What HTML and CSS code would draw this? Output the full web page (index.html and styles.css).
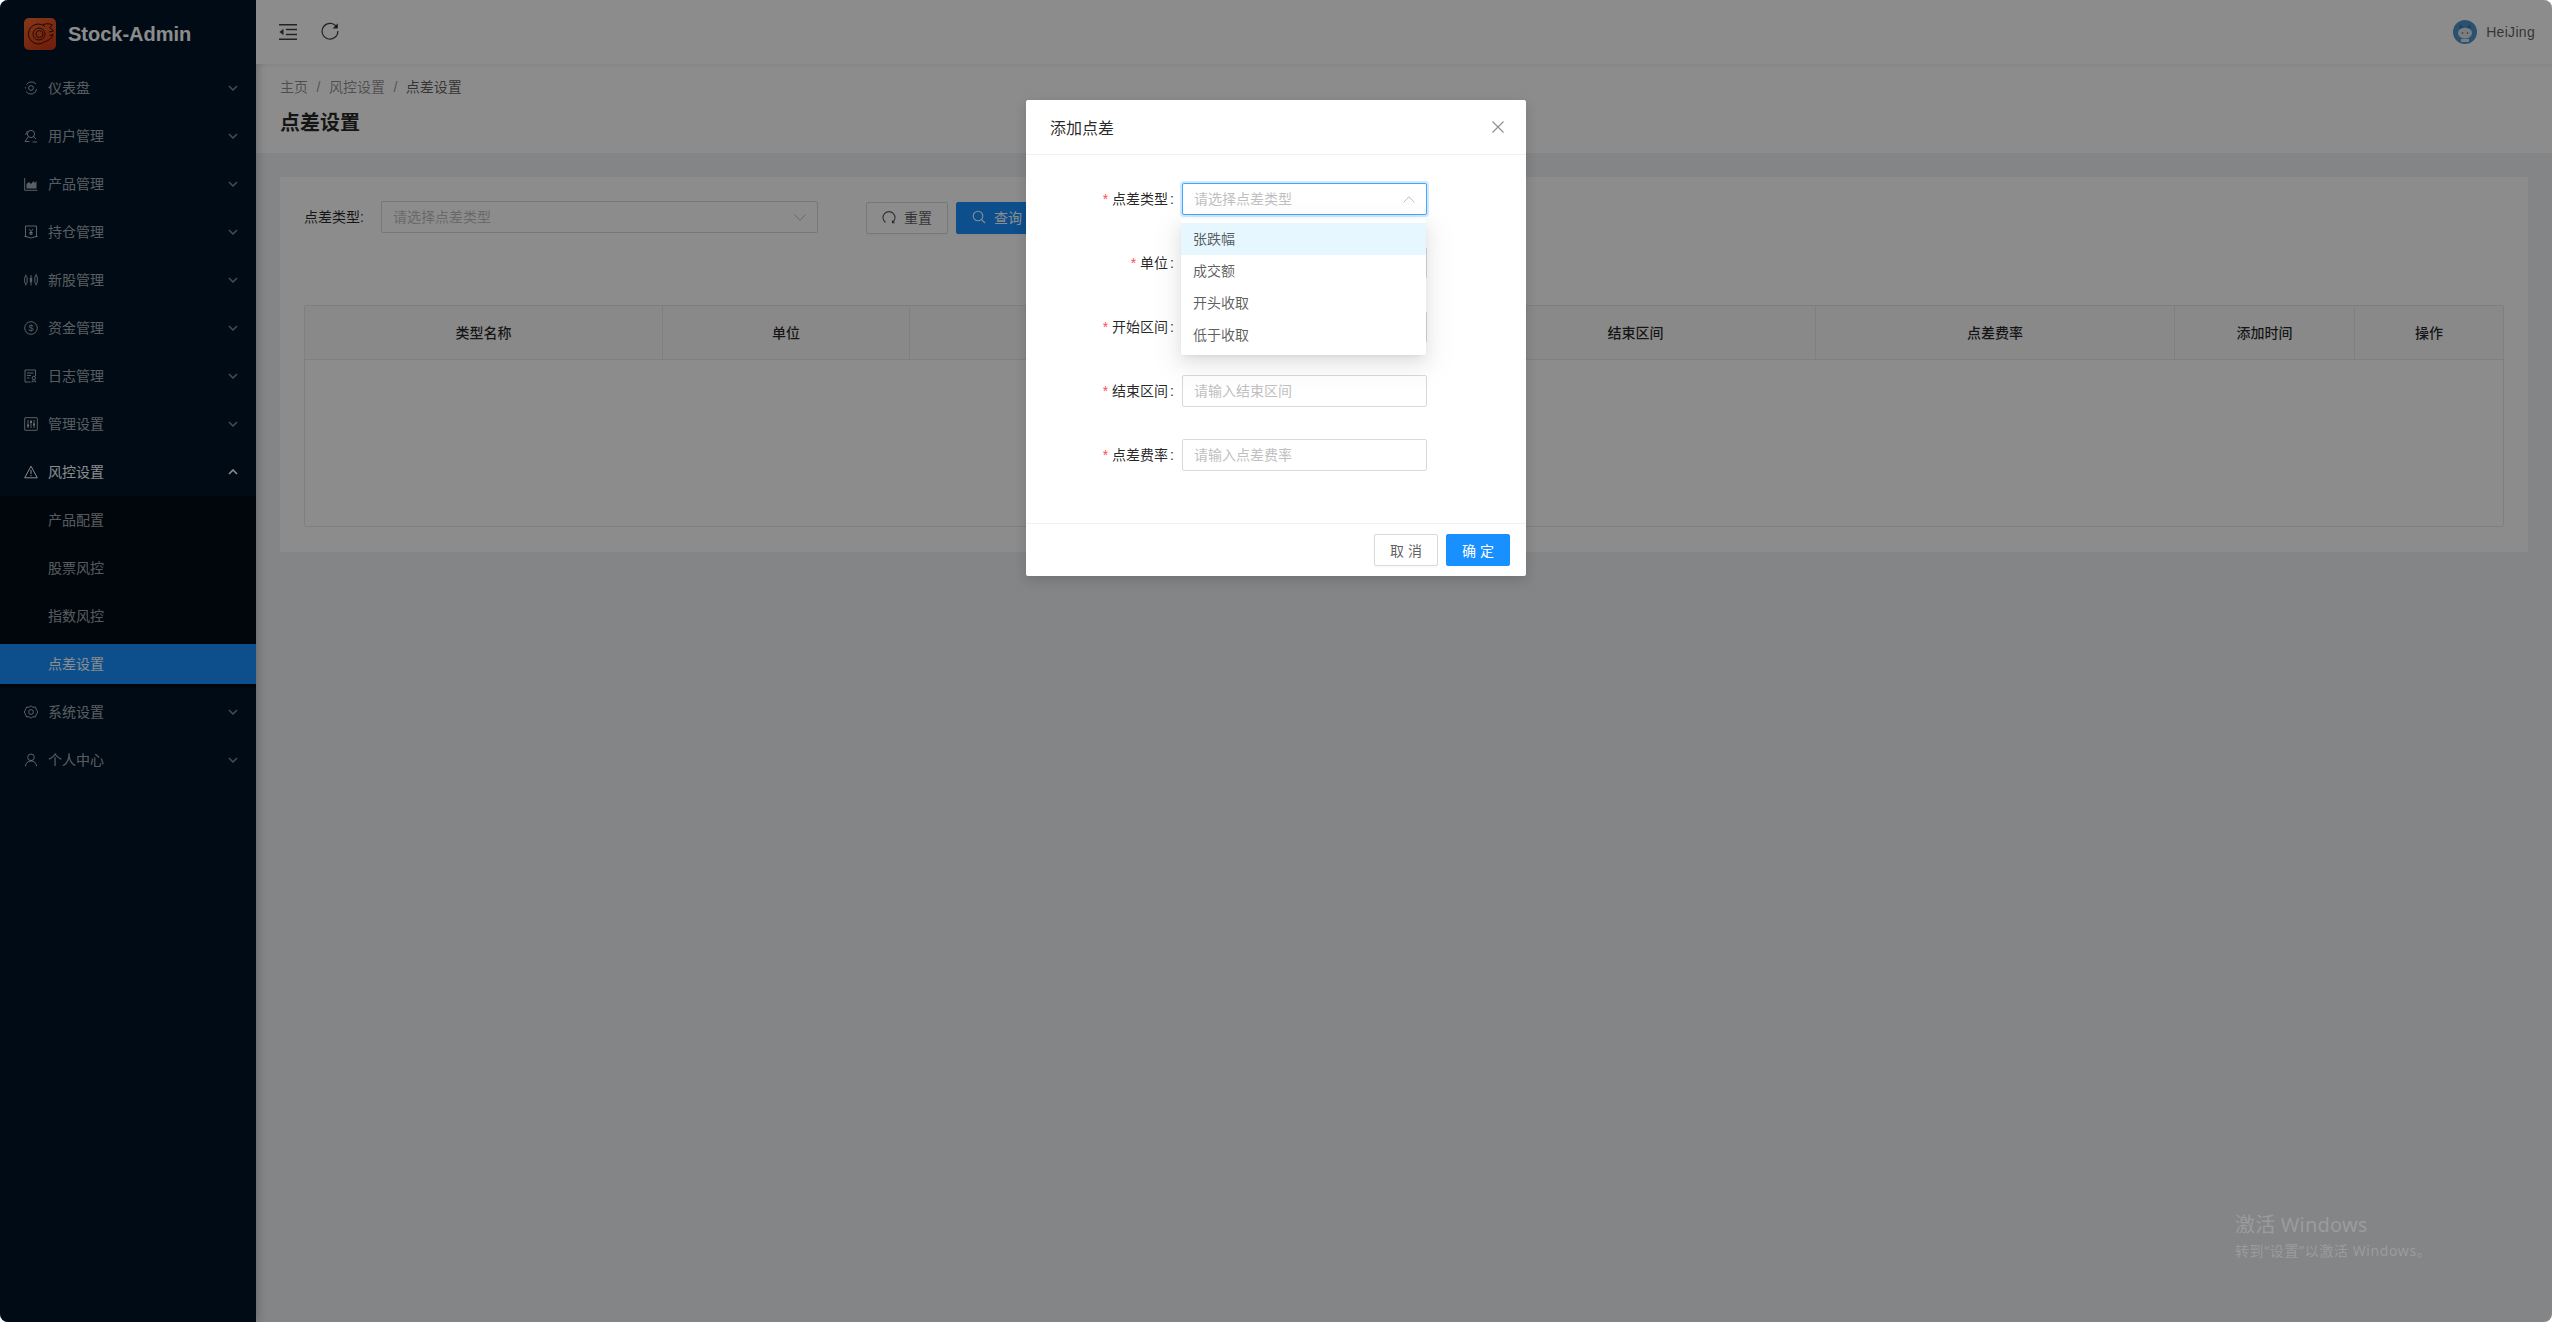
FILE: index.html
```html
<!DOCTYPE html>
<html lang="zh-CN">
<head>
  <meta charset="UTF-8" />
  <title>点差设置 - Stock-Admin</title>
  <link rel="stylesheet" href="styles.css">
</head>
<body>
<div class="app">

  <!-- Sidebar -->
  <aside class="sidebar">
    <div class="logo">
      <svg class="logo-mark" viewBox="0 0 32 32">
        <rect width="32" height="32" rx="5" fill="url(#logoFill)"/>
        <defs>
          <linearGradient id="logoFill" x1="0" y1="0" x2="0.6" y2="1">
            <stop offset="0" stop-color="#f4692c"/>
            <stop offset="1" stop-color="#cf3a18"/>
          </linearGradient>
        </defs>
        <g fill="none" stroke="#3b1206" stroke-width="1">
          <path d="M21 8.500A10 10 0 1 0 21 23.500C25 23 28 20 29 16.500L25.500 17.500"/>
          <path d="M19 6.500C22.500 5.500 26 5.500 28.500 7L25.500 9.500C27 10.200 28.500 11.500 29.500 13L25 14"/>
          <circle cx="15" cy="16" r="6"/>
          <circle cx="15.500" cy="16" r="3.500"/>
        </g>
      </svg>
      <span class="logo-text">Stock-Admin</span>
    </div>

    <ul class="menu">
      <li class="menu-item">
        <svg class="menu-icon" viewBox="0 0 14 14"><path d="M2.500 3.500A6 6 0 0 1 12 3M12.600 8A5.800 5.800 0 0 1 2 10.500M1.500 7.500A5.500 5.500 0 0 1 1.500 6"/><circle cx="7" cy="7" r="2.400"/></svg>
        <span class="menu-label">仪表盘</span>
        <svg class="chevron" viewBox="0 0 10 6"><path d="M1 1l4 4 4-4"/></svg>
      </li>
      <li class="menu-item">
        <svg class="menu-icon" viewBox="0 0 14 14"><circle cx="7" cy="5" r="3.600"/><path d="M9.600 7.600L12 10M4 8L1 12.500H5.500M8.500 13H13M3.500 2L1.500 6"/></svg>
        <span class="menu-label">用户管理</span>
        <svg class="chevron" viewBox="0 0 10 6"><path d="M1 1l4 4 4-4"/></svg>
      </li>
      <li class="menu-item">
        <svg class="menu-icon" viewBox="0 0 14 14"><path d="M.7 1v12.300H13.500"/><path class="solid" d="M2.500 11.500V7l2.500-2 2 2 2.500-3 1 2 2-2v7.500z"/></svg>
        <span class="menu-label">产品管理</span>
        <svg class="chevron" viewBox="0 0 10 6"><path d="M1 1l4 4 4-4"/></svg>
      </li>
      <li class="menu-item">
        <svg class="menu-icon" viewBox="0 0 14 14"><path d="M1.500 1H12.500V11.500L7 13 1.500 11.500z"/><path d="M0.500 11.500h2M11.500 11.500h2M5 4l2 2.500L9 4M7 6.500V10M5.300 7.500h3.400M5.300 9h3.400"/></svg>
        <span class="menu-label">持仓管理</span>
        <svg class="chevron" viewBox="0 0 10 6"><path d="M1 1l4 4 4-4"/></svg>
      </li>
      <li class="menu-item">
        <svg class="menu-icon" viewBox="0 0 14 14"><rect x="0.700" y="3.500" width="2.400" height="7" rx="1"/><rect x="5.800" y="4.500" width="2.400" height="5" rx="1" class="solid"/><rect x="10.900" y="3" width="2.400" height="7.500" rx="1"/><path d="M1.900 1.500v2M1.900 10.500v2M7 2v2.500M7 9.500V12.500M12.100 1v2M12.100 10.500v2"/></svg>
        <span class="menu-label">新股管理</span>
        <svg class="chevron" viewBox="0 0 10 6"><path d="M1 1l4 4 4-4"/></svg>
      </li>
      <li class="menu-item">
        <svg class="menu-icon" viewBox="0 0 14 14"><circle cx="7" cy="7" r="6.300"/><text class="icon-glyph" x="7" y="10">$</text></svg>
        <span class="menu-label">资金管理</span>
        <svg class="chevron" viewBox="0 0 10 6"><path d="M1 1l4 4 4-4"/></svg>
      </li>
      <li class="menu-item">
        <svg class="menu-icon" viewBox="0 0 14 14"><path d="M6.500 13H1V1H11.500V7"/><path d="M3 4h6.500M3 6.500h4M3 9h2.500"/><circle cx="9.800" cy="9" r="1.700"/><path d="M8 13.300v-1.200h3.600v1.200"/></svg>
        <span class="menu-label">日志管理</span>
        <svg class="chevron" viewBox="0 0 10 6"><path d="M1 1l4 4 4-4"/></svg>
      </li>
      <li class="menu-item">
        <svg class="menu-icon" viewBox="0 0 14 14"><rect x="0.700" y="0.700" width="12.600" height="12.600" rx="0.500"/><path d="M4 3v8M7 3v8M10 3v8"/><path class="thick" d="M3 8.500h2M6 5h2M9 7.500h2"/></svg>
        <span class="menu-label">管理设置</span>
        <svg class="chevron" viewBox="0 0 10 6"><path d="M1 1l4 4 4-4"/></svg>
      </li>
      <li class="menu-item is-open">
        <svg class="menu-icon" viewBox="0 0 14 14"><path d="M7 1.200L13.300 12.800H.7z"/><path d="M7 5v4M7 10v1.200"/></svg>
        <span class="menu-label">风控设置</span>
        <svg class="chevron" viewBox="0 0 10 6"><path d="M1 5l4-4 4 4"/></svg>
      </li>
      <li>
        <ul class="sub-menu">
          <li class="menu-item">产品配置</li>
          <li class="menu-item">股票风控</li>
          <li class="menu-item">指数风控</li>
          <li class="menu-item is-selected">点差设置</li>
        </ul>
      </li>
      <li class="menu-item">
        <svg class="menu-icon" viewBox="0 0 14 14"><path d="M7 .8L9 2.300 11.400 2 12.300 4.300 13.800 7 12.300 9.700 11.400 12 9 11.700 7 13.200 5 11.700 2.600 12 1.700 9.700 .2 7 1.700 4.300 2.600 2 5 2.300z"/><circle cx="7" cy="7" r="2.400"/></svg>
        <span class="menu-label">系统设置</span>
        <svg class="chevron" viewBox="0 0 10 6"><path d="M1 1l4 4 4-4"/></svg>
      </li>
      <li class="menu-item">
        <svg class="menu-icon" viewBox="0 0 14 14"><circle cx="7" cy="4.300" r="3.300"/><path d="M1.500 13.300C1.500 10 4 8 7 8s5.500 2 5.500 5.300"/></svg>
        <span class="menu-label">个人中心</span>
        <svg class="chevron" viewBox="0 0 10 6"><path d="M1 1l4 4 4-4"/></svg>
      </li>
    </ul>
  </aside>

  <!-- Main column -->
  <div class="main">
    <header class="topbar">
      <svg class="topbar-icon" viewBox="0 0 18 16"><path d="M0 .8h18M0 15.200h18M7 5.500h11M7 10.500h11"/><path class="solid" d="M4.500 4.800v6.400L.4 8z"/></svg>
      <svg class="topbar-icon reload" viewBox="0 0 18 18"><path d="M15.800 5.200A7.900 7.900 0 1 0 16.900 9"/><path class="solid" d="M16.800 1.200v5.300h-5.300z"/></svg>
      <div class="user">
        <svg class="avatar" viewBox="0 0 24 24">
          <circle cx="12" cy="12" r="12" fill="#4e95cb"/>
          <path d="M6 9L7 4l3 3h4l3-3 1 5z" fill="#2f78b5"/>
          <ellipse cx="12" cy="13" rx="7" ry="5.500" fill="#dfe6ea"/>
          <circle cx="9.500" cy="13" r="0.800" fill="#555"/>
          <circle cx="14.500" cy="13" r="0.800" fill="#555"/>
          <rect x="8" y="19" width="8" height="3" fill="#dfe6ea"/>
        </svg>
        <span class="user-name">HeiJing</span>
      </div>
    </header>

    <section class="page-head">
      <div class="breadcrumb">
        <span>主页</span><i>/</i><span>风控设置</span><i>/</i><span class="current">点差设置</span>
      </div>
      <h1>点差设置</h1>
    </section>

    <section class="card">
      <div class="search">
        <span class="search-label">点差类型:</span>
        <div class="select search-select">
          <span class="placeholder">请选择点差类型</span>
          <svg class="select-arrow" viewBox="0 0 12 7"><path d="M.7.7L6 6.300 11.300.7"/></svg>
        </div>
        <button class="btn">
          <svg class="btn-icon" viewBox="0 0 14 14"><path d="M3.500 12.500A6 6 0 1 1 10.500 12.500"/><path d="M10.500 10.500v2.200h2.200"/></svg>重置
        </button>
        <button class="btn btn-primary">
          <svg class="btn-icon" viewBox="0 0 14 14"><circle cx="6" cy="6" r="4.800"/><path d="M9.500 9.500L13 13"/></svg>查询
        </button>
      </div>

      <table class="data-table">
        <thead>
          <tr>
            <th class="col-name">类型名称</th>
            <th class="col-unit">单位</th>
            <th class="col-start"></th>
            <th class="col-end">结束区间</th>
            <th class="col-rate">点差费率</th>
            <th class="col-time">添加时间</th>
            <th class="col-action">操作</th>
          </tr>
        </thead>
        <tbody>
          <tr><td colspan="7"></td></tr>
        </tbody>
      </table>
    </section>
  </div>

  <!-- Dialog -->
  <div class="mask">
    <div class="modal">
      <div class="modal-head">
        <span>添加点差</span>
        <svg class="modal-close" viewBox="0 0 12 12"><path d="M.5.5l11 11M11.500.5l-11 11"/></svg>
      </div>
      <div class="modal-body">
        <div class="form-row">
          <label><b>*</b>点差类型<em>:</em></label>
          <div class="select is-focused">
            <span class="placeholder">请选择点差类型</span>
            <svg class="select-arrow" viewBox="0 0 12 7"><path d="M.7 6.300L6 .7l5.300 5.600"/></svg>
            <ul class="dropdown">
              <li class="is-active">张跌幅</li>
              <li>成交额</li>
              <li>开头收取</li>
              <li>低于收取</li>
            </ul>
          </div>
        </div>
        <div class="form-row">
          <label><b>*</b>单位<em>:</em></label>
          <div class="select"></div>
        </div>
        <div class="form-row">
          <label><b>*</b>开始区间<em>:</em></label>
          <div class="select"></div>
        </div>
        <div class="form-row">
          <label><b>*</b>结束区间<em>:</em></label>
          <div class="select"><span class="placeholder">请输入结束区间</span></div>
        </div>
        <div class="form-row">
          <label><b>*</b>点差费率<em>:</em></label>
          <div class="select"><span class="placeholder">请输入点差费率</span></div>
        </div>
      </div>
      <div class="modal-foot">
        <button class="btn">取 消</button>
        <button class="btn btn-primary">确 定</button>
      </div>
    </div>

    <div class="watermark">
      <p class="watermark-title">激活 Windows</p>
      <p class="watermark-text">转到“设置”以激活 Windows。</p>
    </div>
  </div>

</div>
</body>
</html>
```

FILE: styles.css
```css
* {
  box-sizing: border-box;
}
html, body {
  margin: 0; padding: 0; height: 100%;
  background: #fff;
  overflow: hidden;
  font-family: "Liberation Sans", "Noto Sans CJK SC", sans-serif;
  font-size: 14px;
  color: rgba(0,0,0,.85);
}
ul {
  margin: 0; padding: 0;
  list-style: none;
}
svg {
  flex: none;
  fill: none;
  stroke: currentColor;
}
svg .solid {
  fill: currentColor;
  stroke: none;
}
.app {
  position: relative;
  display: flex;
  height: 100vh;
  border-radius: 8px;
  overflow: hidden;
  background: #f0f2f5;
}

/* Sidebar */
.sidebar {
  flex: none;
  width: 256px;
  background: #001529;
  color: rgba(255,255,255,.65);
  box-shadow: 2px 0 8px rgba(29,35,41,.25);
  position: relative;
}
.logo {
  display: flex;
  align-items: center;
  height: 64px;
  padding: 4px 0 0 24px;
}
.logo-mark {
  width: 32px; height: 32px;
  stroke: none;
}
.logo-text {
  margin-left: 12px;
  font-size: 20px;
  font-weight: 700;
  color: #fff;
}
.menu, .sub-menu {
  display: flex;
  flex-direction: column;
}
.menu-item {
  display: flex;
  align-items: center;
  height: 40px;
  margin: 4px 0;
  padding: 0 0 2px 48px;
  position: relative;
}
.menu-icon {
  position: absolute;
  left: 24px; top: 13px;
  width: 14px; height: 14px;
  stroke-width: 1;
}
.menu-icon .thick {
  stroke-width: 1.8;
}
.icon-glyph {
  font-size: 9px;
  text-anchor: middle;
  fill: currentColor;
  stroke: none;
}
.menu-label {
  flex: 1;
}
.chevron {
  width: 10px; height: 6px;
  margin: 2px 18px 0 0;
  stroke-width: 1.6;
  opacity: .75;
}
.is-open {
  color: #fff;
}
.is-open .chevron {
  opacity: 1;
}
.sub-menu {
  background: #000c17;
}
.is-selected {
  background: #1890ff;
  color: #fff;
}

/* Main column */
.main {
  flex: 1;
  min-width: 0;
}
.topbar {
  display: flex;
  align-items: center;
  height: 64px;
  padding: 0 17px 0 23px;
  background: #fff;
  box-shadow: 0 1px 4px rgba(0,21,41,.08);
  position: relative;
  color: rgba(0,0,0,.75);
}
.topbar-icon {
  width: 18px; height: 16px;
  margin-right: 24px;
  stroke-width: 1.6;
}
.reload {
  width: 18px; height: 18px;
  margin-top: -3px;
  stroke-width: 1.2;
}
.user {
  margin-left: auto;
  display: flex;
  align-items: center;
  gap: 9px;
  color: rgba(0,0,0,.65);
}
.user-name {
  letter-spacing: .3px;
}
.avatar {
  width: 24px; height: 24px;
  stroke: none;
}
.page-head {
  height: 89px;
  padding: 12px 24px 0;
  background: #fff;
}
.breadcrumb {
  line-height: 22px;
  color: rgba(0,0,0,.45);
}
.breadcrumb i {
  margin: 0 8.500px;
  font-style: normal;
}
.breadcrumb .current {
  color: rgba(0,0,0,.65);
}
h1 {
  margin: 9px 0 0;
  font-size: 20px;
  line-height: 32px;
  font-weight: 600;
}
.card {
  margin: 24px;
  padding: 24px 24px 25px;
  background: #fff;
}

/* Search row */
.search {
  display: flex;
  align-items: flex-start;
  margin-bottom: 71px;
}
.search-label {
  width: 77px;
  line-height: 32px;
}
.select {
  position: relative;
  width: 245px;
  height: 32px;
  padding: 0 11px;
  line-height: 30px;
  background: #fff;
  border: 1px solid #d9d9d9;
  border-radius: 2px;
}
.search-select {
  width: 437px;
  margin-right: 48px;
}
.placeholder {
  color: #bfbfbf;
}
.select-arrow {
  position: absolute;
  right: 11px; top: 12px;
  width: 12px; height: 7px;
  stroke: #bfbfbf;
  stroke-width: 1;
}
.is-focused {
  border-color: #40a9ff;
  box-shadow: 0 0 0 2px rgba(24,144,255,.2);
}
.btn {
  display: inline-flex;
  align-items: center;
  justify-content: center;
  gap: 8px;
  height: 32px;
  padding: 0 15px;
  font: inherit;
  color: rgba(0,0,0,.65);
  background: #fff;
  border: 1px solid #d9d9d9;
  border-radius: 2px;
  box-shadow: 0 2px 0 rgba(0,0,0,.015);
}
.btn-primary {
  color: #fff;
  background: #1890ff;
  border-color: #1890ff;
}
.search .btn {
  margin: 1px 8px 0 0;
  padding-bottom: 2px;
  width: 82px;
}
.btn-icon {
  width: 14px; height: 14px;
  stroke-width: 1.1;
}

/* Table */
.data-table {
  width: 100%;
  table-layout: fixed;
  border-collapse: separate;
  border-spacing: 0;
  border: 1px solid #e8e8e8;
  border-radius: 2px;
}
.data-table th {
  height: 54px;
  padding: 0 0 2px;
  font-weight: 500;
  background: #fafafa;
  border-right: 1px solid #e8e8e8;
  border-bottom: 1px solid #e8e8e8;
}
.data-table th:last-child {
  border-right: 0;
}
.data-table td {
  height: 166px;
}
.col-name { width: 358px; }
.col-unit { width: 247px; }
.col-start { width: 546px; }
.col-end { width: 360px; }
.col-rate { width: 359px; }
.col-time { width: 180px; }

/* Dialog */
.mask {
  position: absolute;
  inset: 0;
  background: rgba(0,0,0,.45);
}
.modal {
  width: 500px;
  height: 476px;
  margin: 100px auto 0;
  display: flex;
  flex-direction: column;
  background: #fff;
  border-radius: 2px;
  box-shadow: 0 4px 12px rgba(0,0,0,.15);
}
.modal-head {
  display: flex;
  align-items: center;
  justify-content: space-between;
  height: 55px;
  padding: 0 22px 0 24px;
  font-size: 16px;
  border-bottom: 1px solid #f0f0f0;
}
.modal-close {
  width: 12px; height: 12px;
  stroke: rgba(0,0,0,.45);
  stroke-width: 1.1;
}
.modal-body {
  flex: 1;
  padding-top: 28px;
}
.form-row {
  display: flex;
  margin-bottom: 32px;
}
.form-row:first-child {
  position: relative;
  z-index: 1;
}
.form-row label {
  width: 156px;
  line-height: 32px;
  text-align: right;
}
.form-row b {
  margin-right: 4px;
  color: #ff4d4f;
  font-weight: 400;
}
.form-row em {
  margin: 0 8px 0 2px;
  font-style: normal;
}
.dropdown {
  position: absolute;
  left: -2px; top: 35px;
  width: 245px;
  padding: 4px 0;
  color: rgba(0,0,0,.65);
  background: #fff;
  border-radius: 2px;
  box-shadow: 0 3px 6px -4px rgba(0,0,0,.12), 0 6px 16px rgba(0,0,0,.08), 0 9px 28px 8px rgba(0,0,0,.05);
}
.dropdown li {
  height: 32px;
  padding: 0 12px;
  line-height: 32px;
}
.dropdown .is-active {
  background: #e6f7ff;
}
.modal-foot {
  display: flex;
  justify-content: flex-end;
  gap: 8px;
  height: 53px;
  padding: 10px 16px;
  border-top: 1px solid #f0f0f0;
}
.modal-foot .btn {
  width: 64px;
}

/* Activation notice */
.watermark {
  position: absolute;
  left: 2235px; top: 1211px;
  color: rgba(255,255,255,.2);
  font-family: "Noto Sans", "Noto Sans CJK SC", sans-serif;
  font-size: 14px;
}
.watermark p {
  margin: 0;
  line-height: 20px;
}
.watermark .watermark-title {
  font-size: 20px;
  margin-bottom: 2px;
  line-height: 28px;
  letter-spacing: .2px;
}
.watermark-text {
  letter-spacing: .6px;
}
```
